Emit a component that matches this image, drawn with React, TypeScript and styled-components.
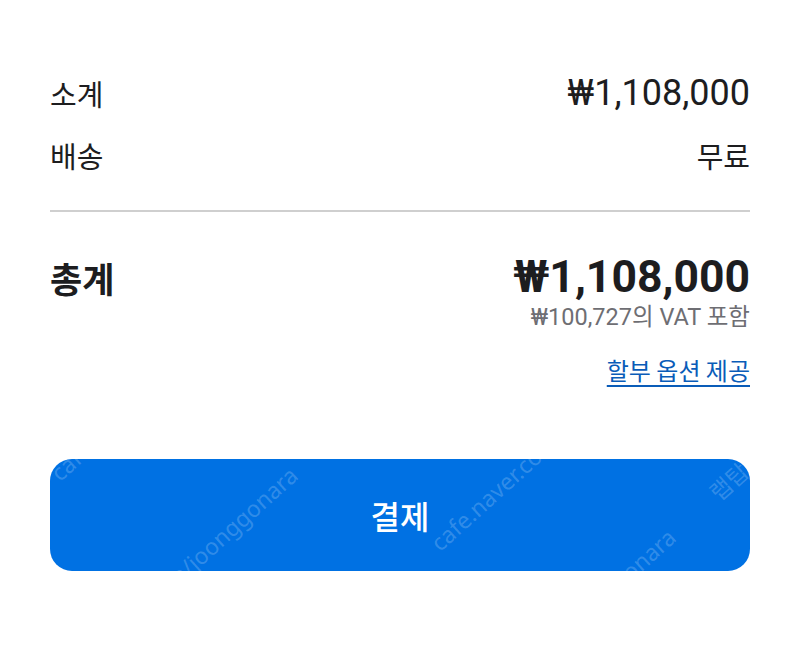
import React from "react";
import styled, { createGlobalStyle } from "styled-components";

const Global = createGlobalStyle`
  html, body { margin: 0; padding: 0; background: #fff; }
  body { font-family: "Noto Sans CJK KR", "Noto Sans", sans-serif; color: #1d1d1f; }
`;

const Page = styled.div`
  width: 800px;
  height: 654px;
  box-sizing: border-box;
  padding: 71px 50px 0 50px;
  display: flex;
  flex-direction: column;
`;

const Row = styled.div<{ $gap?: number }>`
  display: flex;
  justify-content: space-between;
  align-items: center;
  height: 44px;
  margin-bottom: ${(p) => p.$gap ?? 0}px;
`;

const Label = styled.span`
  font-family: "Noto Sans CJK KR", sans-serif;
  font-size: 29px;
  font-weight: 400;
  color: #1d1d1f;
`;

const Value = styled.span`
  font-family: Roboto, "Noto Sans CJK KR", sans-serif;
  font-size: 36px;
  font-weight: 400;
  color: #1d1d1f;
`;

const KrValue = styled(Label)``;

const Divider = styled.hr`
  border: none;
  height: 2px;
  background: #cfcfcf;
  margin: 33px 0 40px 0;
`;

const TotalRow = styled.div`
  display: flex;
  justify-content: space-between;
  align-items: center;
  height: 50px;
`;

const TotalLabel = styled.span`
  font-family: "Noto Sans CJK KR", sans-serif;
  font-size: 35px;
  font-weight: 700;
  color: #1d1d1f;
`;

const TotalValue = styled.span`
  font-family: Roboto, "Noto Sans CJK KR", sans-serif;
  font-size: 44.5px;
  font-weight: 700;
  color: #1d1d1f;
`;

const Vat = styled.div`
  text-align: right;
  height: 30px;
  line-height: 30px;
  font-family: Roboto, "Noto Sans CJK KR", sans-serif;
  font-size: 23.5px;
  color: #6e6e73;
`;

const LinkWrap = styled.div`
  display: flex;
  justify-content: flex-end;
  margin-top: 20px;
  height: 34px;
  align-items: center;
`;

const Link = styled.a`
  font-family: "Noto Sans CJK KR", sans-serif;
  font-size: 24px;
  color: #0a5cb8;
  text-decoration: underline;
  text-underline-offset: 5px;
  text-decoration-thickness: 2px;
`;

const PayButton = styled.button`
  position: relative;
  overflow: hidden;
  margin-top: 73px;
  height: 112px;
  width: 100%;
  border: none;
  border-radius: 22px;
  background: #0071e3;
  color: #fff;
  font-family: "Noto Sans CJK KR", sans-serif;
  font-size: 32px;
  font-weight: 500;
  display: flex;
  align-items: center;
  justify-content: center;
  padding: 0;
`;

const Watermark = styled.span<{ $x: number; $y: number }>`
  position: absolute;
  left: ${(p) => p.$x}px;
  top: ${(p) => p.$y}px;
  height: 30px;
  line-height: 30px;
  transform: rotate(-42deg);
  transform-origin: left bottom;
  white-space: nowrap;
  font-family: "Noto Sans", "Noto Sans CJK KR", sans-serif;
  font-size: 23px;
  font-weight: 400;
  color: rgba(255, 255, 255, 0.2);
  pointer-events: none;
`;

const marks = [
  { x: 14, y: -2, t: "cafe.naver.com/joonggonara" },
  { x: 24, y: 200, t: "cafe.naver.com/joonggonara" },
  { x: 394, y: 68, t: "cafe.naver.com/joonggonara" },
  { x: 402, y: 262, t: "cafe.naver.com/joonggonara" },
  { x: 673, y: 18, t: "랩탑" },
];

export default function App() {
  return (
    <>
      <Global />
      <Page>
        <Row $gap={18}>
          <Label>소계</Label>
          <Value>₩1,108,000</Value>
        </Row>
        <Row>
          <Label>배송</Label>
          <KrValue>무료</KrValue>
        </Row>
        <Divider />
        <TotalRow>
          <TotalLabel>총계</TotalLabel>
          <TotalValue>₩1,108,000</TotalValue>
        </TotalRow>
        <Vat>₩100,727의 VAT 포함</Vat>
        <LinkWrap>
          <Link href="#">할부 옵션 제공</Link>
        </LinkWrap>
        <PayButton>
          {marks.map((m, i) => (
            <Watermark key={i} $x={m.x} $y={m.y}>
              {m.t}
            </Watermark>
          ))}
          결제
        </PayButton>
      </Page>
    </>
  );
}
